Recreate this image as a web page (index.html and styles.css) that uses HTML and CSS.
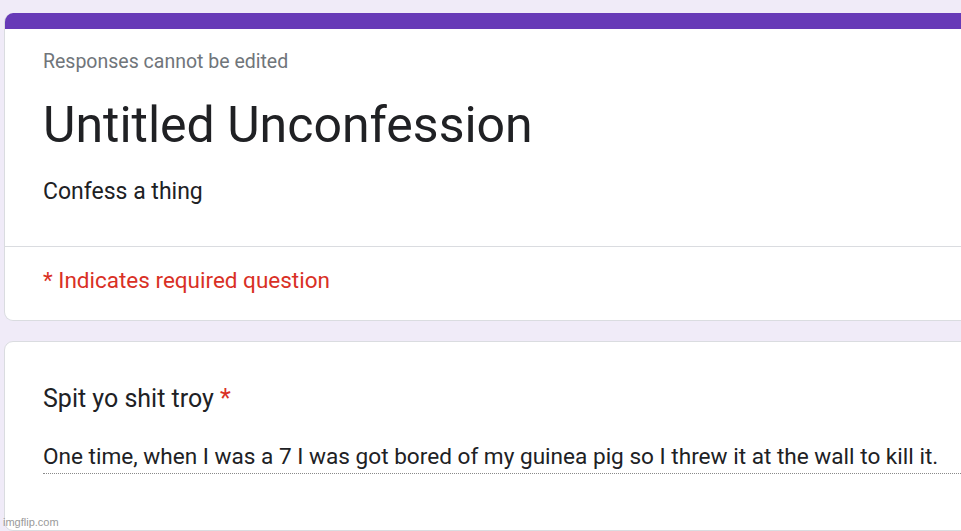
FILE: index.html
```html
<!DOCTYPE html>
<html>
<head>
<meta charset="utf-8">
<link rel="stylesheet" href="styles.css">
</head>
<body>
<div class="page">
  <div class="card header-card">
    <div class="accent"></div>
    <div class="header-body">
      <div class="note">Responses cannot be edited</div>
      <div class="title">Untitled Unconfession</div>
      <div class="desc">Confess a thing</div>
    </div>
    <div class="divider"></div>
    <div class="required">* Indicates required question</div>
  </div>
  <div class="card question-card">
    <div class="question">Spit yo shit troy <span class="star">*</span></div>
    <div class="answer">One time, when I was a 7 I was got bored of my guinea pig so I threw it at the wall to kill it.</div>
  </div>
</div>
<div class="watermark">imgflip.com</div>
</body>
</html>
```
FILE: styles.css
```css
html, body {
  margin: 0;
  padding: 0;
  width: 961px;
  height: 531px;
  overflow: hidden;
  background: #f0ebf8;
  font-family: Roboto, "Noto Sans", sans-serif;
  color: #202124;
}
.page {
  padding: 13px 0 0 4px;
  display: flex;
  flex-direction: column;
  gap: 20px;
}
.card {
  width: 1000px;
  background: #fff;
  border: 1px solid #dadce0;
  border-radius: 9px;
  box-sizing: border-box;
  overflow: hidden;
}
.header-card {
  border-top: none;
  height: 308px;
}
.accent {
  height: 16px;
  background: #673ab7;
}
.header-body {
  padding: 21px 0 0 38px;
}
.note {
  font-size: 19.5px;
  line-height: 24px;
  color: #70757a;
}
.title {
  font-size: 50px;
  line-height: 60px;
  margin-top: 21px;
}
.desc {
  font-size: 23px;
  line-height: 30px;
  margin-top: 22px;
}
.divider {
  height: 1px;
  background: #dadce0;
  margin-top: 39px;
}
.required {
  padding: 18px 0 0 38px;
  font-size: 22.5px;
  line-height: 30px;
  color: #d93025;
}
.question-card {
  height: 190px;
  padding: 42px 0 0 38px;
}
.question {
  font-size: 25px;
  line-height: 30px;
}
.star {
  color: #d93025;
}
.answer {
  margin-top: 28px;
  font-size: 22.6px;
  line-height: 30px;
  padding-bottom: 1px;
  border-bottom: 1px dotted #8a8a8a;
  white-space: nowrap;
}
.watermark {
  position: absolute;
  left: 3px;
  bottom: 3px;
  font-family: "Liberation Sans", Arial, sans-serif;
  font-size: 11px;
  color: #9a9a9a;
}
```
